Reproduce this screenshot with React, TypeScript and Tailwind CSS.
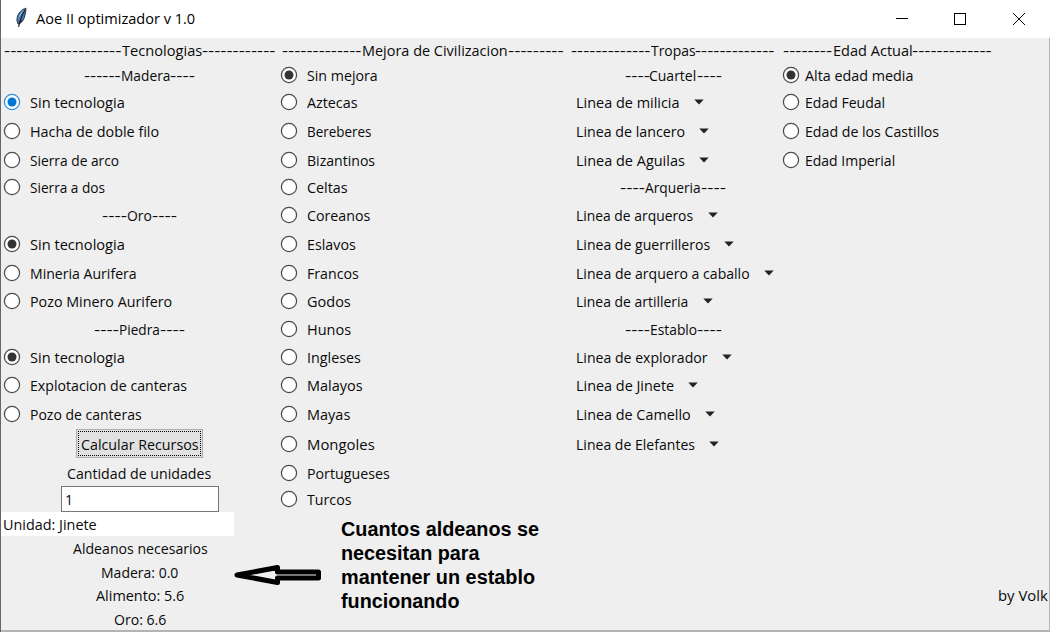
import { useLayoutEffect, useRef, type CSSProperties, type ReactNode } from "react";

/** Text run whose glyphs are condensed or widened to an exact advance width. */
function Fit({ w, children, className = "" }: { w: number; children: ReactNode; className?: string }) {
  const ref = useRef<HTMLSpanElement>(null);
  useLayoutEffect(() => {
    const el = ref.current;
    if (el) el.style.transform = `scaleX(${w / el.offsetWidth})`;
  }, [w]);
  return (
    <span className={`flex shrink-0 ${className}`} style={{ width: w }}>
      <span ref={ref} className="block w-max shrink-0 origin-left whitespace-pre">
        {children}
      </span>
    </span>
  );
}

function Cell({ col, row, children, className = "" }: { col: number; row: number; children: ReactNode; className?: string }) {
  const place: CSSProperties = { gridColumn: col, gridRow: row };
  return (
    <div className={`flex min-w-0 items-center ${className}`} style={place}>
      {children}
    </div>
  );
}

function Heading({ col, row, left, text, w, right, pitch = 6.13 }: { col: number; row: number; left: number; text: string; w: number; right: number; pitch?: number }) {
  return (
    <Cell col={col} row={row} className="justify-center">
      <Fit w={left * pitch}>{"-".repeat(left)}</Fit>
      <Fit w={w}>{text}</Fit>
      <Fit w={right * 6.13}>{"-".repeat(right)}</Fit>
    </Cell>
  );
}

function RadioMark({ checked, active }: { checked?: boolean; active?: boolean }) {
  const ink = active ? "#0078d7" : "#333333";
  return (
    <svg width="18" height="18" viewBox="0 0 18 18" className="shrink-0">
      <circle cx="9" cy="9" r="7.6" fill="#fff" stroke={active ? "#2a8ddc" : "#4c4c4c"} strokeWidth="1.25" />
      {checked && <circle cx="9" cy="9" r="4.5" fill={ink} />}
    </svg>
  );
}

type Item = { row: number; text: string; w: number; checked?: boolean; active?: boolean };

const technologies: Item[] = [
  { row: 3, text: "Sin tecnologia", w: 94.5, checked: true, active: true },
  { row: 4, text: "Hacha de doble filo", w: 129.5 },
  { row: 5, text: "Sierra de arco", w: 89 },
  { row: 6, text: "Sierra a dos", w: 75.5 },
  { row: 8, text: "Sin tecnologia", w: 94.5, checked: true },
  { row: 9, text: "Mineria Aurifera", w: 107 },
  { row: 10, text: "Pozo Minero Aurifero", w: 142 },
  { row: 12, text: "Sin tecnologia", w: 94.5, checked: true },
  { row: 13, text: "Explotacion de canteras", w: 157.5 },
  { row: 14, text: "Pozo de canteras", w: 112 },
];

const civilizations: Item[] = [
  { row: 2, text: "Sin mejora", w: 71, checked: true },
  { row: 3, text: "Aztecas", w: 50.5 },
  { row: 4, text: "Bereberes", w: 64.5 },
  { row: 5, text: "Bizantinos", w: 68.5 },
  { row: 6, text: "Celtas", w: 41 },
  { row: 7, text: "Coreanos", w: 63.5 },
  { row: 8, text: "Eslavos", w: 48.5 },
  { row: 9, text: "Francos", w: 52 },
  { row: 10, text: "Godos", w: 43.5 },
  { row: 11, text: "Hunos", w: 44.5 },
  { row: 12, text: "Ingleses", w: 53.5 },
  { row: 13, text: "Malayos", w: 56 },
  { row: 14, text: "Mayas", w: 43.5 },
  { row: 15, text: "Mongoles", w: 67.5 },
  { row: 16, text: "Portugueses", w: 82.5 },
  { row: 17, text: "Turcos", w: 44.5 },
];

const troops: Item[] = [
  { row: 3, text: "Linea de milicia", w: 104 },
  { row: 4, text: "Linea de lancero", w: 109 },
  { row: 5, text: "Linea de Aguilas", w: 109 },
  { row: 7, text: "Linea de arqueros", w: 117.5 },
  { row: 8, text: "Linea de guerrilleros", w: 134 },
  { row: 9, text: "Linea de arquero a caballo", w: 173.5 },
  { row: 10, text: "Linea de artilleria", w: 112.5 },
  { row: 12, text: "Linea de explorador", w: 131.5 },
  { row: 13, text: "Linea de Jinete", w: 98 },
  { row: 14, text: "Linea de Camello", w: 115 },
  { row: 15, text: "Linea de Elefantes", w: 119 },
];

const ages: Item[] = [
  { row: 2, text: "Alta edad media", w: 108 },
  { row: 3, text: "Edad Feudal", w: 80.5 },
  { row: 4, text: "Edad de los Castillos", w: 134 },
  { row: 5, text: "Edad Imperial", w: 90.5 },
];

const results: Item[] = [
  { row: 19, text: "Aldeanos necesarios", w: 134.5 },
  { row: 20, text: "Madera: 0.0", w: 77.5 },
  { row: 21, text: "Alimento: 5.6", w: 88.5 },
  { row: 22, text: "Oro: 6.6", w: 52.5 },
];

function TitleBar() {
  return (
    <header className="flex h-[38px] items-center bg-white pl-[14px] font-['Open_Sans',sans-serif] text-[15px] text-black">
      <svg width="13" height="22" viewBox="0 0 13 22" className="mb-[2px] mr-2 shrink-0">
        <path d="M10.8 1.2C7 2.2 3.2 5.8 2.2 10.5C1.6 13.4 2.2 15.6 3.4 17.2C7.2 15.5 9.4 11.8 10 8C10.5 5.3 11.2 3 10.8 1.2Z" fill="#4878b0" stroke="#253443" strokeWidth="1" />
        <path d="M10 2C6.5 4 3.8 7.5 3.2 12.5C4.7 9 6.6 6 10 2Z" fill="#8fc0ec" />
        <path d="M10.3 2.5C7.6 6.7 5.2 12 3.6 20M3.4 17.2L7.3 13.5" fill="none" stroke="#16191d" strokeWidth="1.1" />
      </svg>
      <Fit w={159} className="mb-[2px]">Aoe II optimizador v 1.0</Fit>
      <svg width="154" height="38" viewBox="0 0 154 38" className="ml-auto" fill="none" stroke="#000" strokeWidth="1">
        <path d="M0 18.5H12" />
        <rect x="58.5" y="13.5" width="11" height="11" />
        <path d="M117 13L129 25M129 13L117 25" />
      </svg>
    </header>
  );
}

export default function App() {
  return (
    <div className="relative flex h-[632px] w-[1050px] flex-col overflow-hidden border-l border-[#666] bg-[#efefef] font-['Open_Sans',sans-serif] text-[15px] leading-[20px] text-[#0a0a0a]">
      <TitleBar />
      <main className="grid h-[592px] grid-cols-[277px_289px_212px_269px] grid-rows-[23px_27px_28px_29px_29px_26px_29px_29px_29px_28px_28px_27px_29px_29px_31px_27px_26px_24px_24px_24px_23px_24px] border-r border-r-[#b5b5b5]">
        <Heading col={1} row={1} left={19} text="Tecnologias" w={80} right={12} pitch={6.2} />
        <Heading col={1} row={2} left={6} text="Madera" w={49.5} right={4} />
        <Heading col={1} row={7} left={4} text="Oro" w={25} right={4} />
        <Heading col={1} row={11} left={4} text="Piedra" w={41} right={4} />
        <Heading col={2} row={1} left={13} text="Mejora de Civilizacion" w={145.5} right={9} />
        <Heading col={3} row={1} left={13} text="Tropas" w={44.5} right={13} />
        <Heading col={3} row={2} left={4} text="Cuartel" w={47.5} right={4} />
        <Heading col={3} row={6} left={4} text="Arqueria" w={56} right={4} />
        <Heading col={3} row={11} left={4} text="Establo" w={47} right={4} />
        <Cell col={4} row={1} className="pl-[4px]">
          <Fit w={49.5}>{"--------"}</Fit>
          <Fit w={79.5}>Edad Actual</Fit>
          <Fit w={80}>{"-------------"}</Fit>
        </Cell>

        {technologies.map((t) => (
          <Cell key={t.row} col={1} row={t.row} className="gap-[9px] pl-[2px]">
            <RadioMark checked={t.checked} active={t.active} />
            <Fit w={t.w}>{t.text}</Fit>
          </Cell>
        ))}
        {civilizations.map((t) => (
          <Cell key={t.row} col={2} row={t.row} className="gap-[9px] pl-[2px]">
            <RadioMark checked={t.checked} />
            <Fit w={t.w}>{t.text}</Fit>
          </Cell>
        ))}
        {troops.map((t) => (
          <Cell key={t.row} col={3} row={t.row} className="gap-[14px] pl-[9px]">
            <Fit w={t.w}>{t.text}</Fit>
            <svg width="10" height="6" viewBox="0 0 10 6" className="shrink-0">
              <path d="M0.3 0.5H9.7L5 5.5Z" fill="#222" />
            </svg>
          </Cell>
        ))}
        {ages.map((t) => (
          <Cell key={t.row} col={4} row={t.row} className="gap-[5px] pl-[3px]">
            <RadioMark checked={t.row === 2} />
            <Fit w={t.w}>{t.text}</Fit>
          </Cell>
        ))}

        <Cell col={1} row={15} className="justify-center">
          <button className="flex h-[29px] w-[127px] items-center justify-center border border-[#adadad] bg-[#e1e1e1] p-px">
            <span className="flex h-full w-full items-center justify-center border border-dotted border-black">
              <Fit w={118}>Calcular Recursos</Fit>
            </span>
          </button>
        </Cell>
        <Cell col={1} row={16} className="justify-center">
          <Fit w={144.5}>Cantidad de unidades</Fit>
        </Cell>
        <Cell col={1} row={17} className="justify-center">
          <div className="flex h-[26px] w-[158px] shrink-0 items-center border border-[#767676] bg-white pl-[3px]">
            <Fit w={8.5}>1</Fit>
          </div>
        </Cell>
        <Cell col={1} row={18} className="mr-[44px] bg-white pl-[2px]">
          <Fit w={94}>Unidad: Jinete</Fit>
        </Cell>
        {results.map((t) => (
          <Cell key={t.row} col={1} row={t.row} className="justify-center pb-px pl-px">
            <Fit w={t.w}>{t.text}</Fit>
          </Cell>
        ))}
        <Cell col={4} row={21} className="justify-end pb-px pr-px">
          <Fit w={49.5}>by Volk</Fit>
        </Cell>
      </main>
      <div className="h-[2px] shrink-0 bg-[#b4b4b4]" />

      <svg width="96" height="30" viewBox="0 0 96 30" className="absolute left-[229px] top-[560px]">
        <path d="M7 15L47.5 7.5V12H88.5V18H47.5V22.5Z" fill="#efefef" stroke="#000" strokeWidth="5" strokeLinejoin="round" />
      </svg>
      <div className="absolute left-[340px] top-[517px] font-['Liberation_Sans',Arial,sans-serif] text-[20px] font-bold leading-[24px] text-black">
        <Fit w={198}>Cuantos aldeanos se</Fit>
        <Fit w={138.5}>necesitan para</Fit>
        <Fit w={194.5}>mantener un establo</Fit>
        <Fit w={118.5}>funcionando</Fit>
      </div>
    </div>
  );
}
